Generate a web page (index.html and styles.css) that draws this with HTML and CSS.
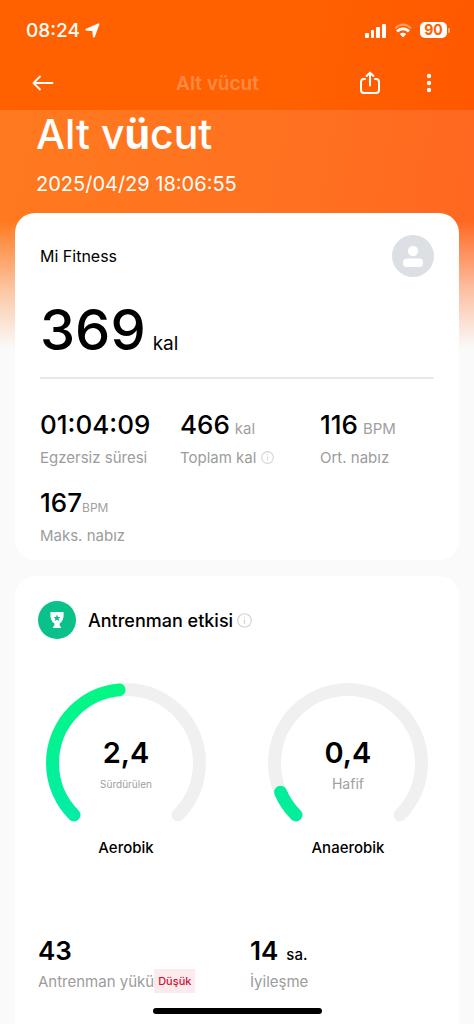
FILE: index.html
```html
<!DOCTYPE html>
<html lang="tr">
<head>
<meta charset="utf-8">
<meta name="viewport" content="width=device-width, initial-scale=1">
<title>Alt vücut</title>
<link rel="stylesheet" href="styles.css">
</head>
<body>
<div class="page">
  <header class="topbar">
    <div class="status">
      <div class="status-left">
        <span class="clock">08:24</span>
        <svg width="15" height="15" viewBox="0 0 16 16" aria-hidden="true"><path d="M15.400 1.400 10.400 14.800Q9.400 16.400 8.400 14.600L7.800 8.600 1.400 8.200Q-.4 7.400 1.200 6.200L13.800.6Q15.800.2 15.400 1.400Z" fill="#fff"/></svg>
      </div>
      <div class="status-right">
        <svg width="21" height="15" viewBox="0 0 21 15" fill="#fff" aria-hidden="true"><rect x="0" y="10" width="4" height="5" rx="1"/><rect x="6" y="7" width="3" height="8" rx="1"/><rect x="11" y="4" width="4" height="11" rx="1"/><rect x="17" y="1" width="4" height="14" rx="1"/></svg>
        <svg width="18" height="15" viewBox="0 0 18 15" fill="none" aria-hidden="true"><path d="M1 5.200Q9-2 17 5.200" stroke="#ff9a5c" stroke-width="2"/><path d="M3 8.400Q9 3 15 8.400" stroke="#fff" stroke-width="2.800"/><path d="M5.800 11Q9 8.400 12.200 11L9 14.600Z" fill="#fff"/></svg>
        <div class="battery"><span class="battery-level">90</span><span class="battery-tip"></span></div>
      </div>
    </div>
    <nav class="nav">
      <button class="icon-button" aria-label="Geri"><svg width="22" height="18" viewBox="0 0 22 18" fill="none" stroke="#fff" stroke-width="1.800" stroke-linecap="round" stroke-linejoin="round"><path d="M20.500 9H1.500M8 2.500 1.500 9 8 15.500"/></svg></button>
      <span class="nav-title">Alt vücut</span>
      <button class="icon-button" aria-label="Paylaş"><svg width="22" height="24" viewBox="0 0 22 24" fill="none" stroke="#fff" stroke-width="2" stroke-linecap="round" stroke-linejoin="round"><path d="M6 8H5Q2 8 2 11V19Q2 22 5 22H17Q20 22 20 19V11Q20 8 17 8H16M11 14.500V2M7.600 5 11 1.600 14.400 5"/></svg></button>
      <button class="icon-button" aria-label="Menü"><svg width="6" height="20" viewBox="0 0 6 20" fill="#fff"><circle cx="3" cy="3" r="2.200"/><circle cx="3" cy="10" r="2.200"/><circle cx="3" cy="17" r="2.200"/></svg></button>
    </nav>
  </header>

  <section class="hero">
    <h1 class="hero-title">Alt v<b>ü</b>cut</h1>
    <time class="hero-date">2025/04/29 18:06:55</time>
  </section>

  <main class="content">
    <section class="card summary">
      <div class="source">
        <span>Mi Fitness</span>
        <svg width="42" height="42" viewBox="0 0 42 42" aria-hidden="true"><circle cx="21" cy="21" r="21" fill="#dcdfe3"/><circle cx="21" cy="16" r="5.200" fill="#fff"/><rect x="11" y="23.500" width="20" height="8.500" rx="3.500" fill="#fff"/></svg>
      </div>
      <div class="calories"><span class="calories-value">369</span><span class="calories-unit">kal</span></div>
      <dl class="stats">
        <div class="stat"><dd class="stat-value">01:04:09</dd><dt class="stat-label">Egzersiz süresi</dt></div>
        <div class="stat"><dd class="stat-value">466 <small class="unit">kal</small></dd><dt class="stat-label">Toplam kal <svg width="13" height="13" viewBox="0 0 16 16" aria-hidden="true"><circle cx="8" cy="8" r="7.200" fill="none" stroke="#d4d4d4" stroke-width="1.300"/><path d="M8 7V12M8 4V5.300" stroke="#d4d4d4" stroke-width="1.300"/></svg></dt></div>
        <div class="stat"><dd class="stat-value">116 <small class="unit">BPM</small></dd><dt class="stat-label">Ort. nabız</dt></div>
        <div class="stat"><dd class="stat-value stat-value-tight">167<small class="unit unit-small">BPM</small></dd><dt class="stat-label">Maks. nabız</dt></div>
      </dl>
    </section>

    <section class="card effect">
      <h2 class="effect-title">
        <svg width="38" height="38" viewBox="0 0 38 38" aria-hidden="true"><circle cx="19" cy="19" r="19" fill="#0bc18b"/><path d="M12.500 11H25.500Q26.500 19.500 21.600 22.400V24.200L23.400 27H14.600L16.400 24.200V22.400Q11.500 19.500 12.500 11Z" fill="#fff"/><path d="M19 13.600 20 15.900 22.400 16.100 20.600 17.700 21.100 20.100 19 18.800 16.900 20.100 17.400 17.700 15.600 16.100 18 15.900Z" fill="#0bc18b"/></svg>
        <span>Antrenman etkisi</span>
        <svg class="info" width="15" height="15" viewBox="0 0 16 16" aria-hidden="true"><circle cx="8" cy="8" r="7.200" fill="none" stroke="#d4d4d4" stroke-width="1.300"/><path d="M8 7V12M8 4V5.300" stroke="#d4d4d4" stroke-width="1.300"/></svg>
      </h2>
      <div class="gauges">
        <figure class="gauge">
          <div class="dial">
            <svg width="162" height="162" viewBox="0 0 162 162" fill="none" stroke-width="13" stroke-linecap="round" aria-hidden="true">
              <defs><linearGradient id="green" x1="0" y1="1" x2="0" y2="0"><stop offset="0" stop-color="#03eda6"/><stop offset="1" stop-color="#03f784"/></linearGradient></defs>
              <path d="M29 133A73.500 73.500 0 1 1 133 133" stroke="#f0f0f0"/>
              <path d="M29 133A73.500 73.500 0 1 1 133 133" stroke="url(#green)" pathLength="100" stroke-dasharray="48 200"/>
            </svg>
            <div class="dial-text"><span class="dial-value">2,4</span><span class="dial-note dial-note-small">Sürdürülen</span></div>
          </div>
          <figcaption>Aerobik</figcaption>
        </figure>
        <figure class="gauge">
          <div class="dial">
            <svg width="162" height="162" viewBox="0 0 162 162" fill="none" stroke-width="13" stroke-linecap="round" aria-hidden="true">
              <path d="M29 133A73.500 73.500 0 1 1 133 133" stroke="#f0f0f0"/>
              <path d="M29 133A73.500 73.500 0 1 1 133 133" stroke="#03ee9a" pathLength="100" stroke-dasharray="8 200"/>
            </svg>
            <div class="dial-text"><span class="dial-value">0,4</span><span class="dial-note">Hafif</span></div>
          </div>
          <figcaption>Anaerobik</figcaption>
        </figure>
      </div>
      <dl class="loads">
        <div class="stat"><dd class="stat-value load-value">43</dd><dt class="stat-label load-label">Antrenman yükü<span class="tag">Düşük</span></dt></div>
        <div class="stat"><dd class="stat-value load-value">14 <small class="unit unit-dark">sa.</small></dd><dt class="stat-label load-label">İyileşme</dt></div>
      </dl>
    </section>
  </main>
  <div class="home-indicator"></div>
</div>
</body>
</html>
```
FILE: styles.css
```css
* { box-sizing: border-box; }

body, h1, h2, dl, dd, figure { margin: 0; }

body {
  background: #fafafa;
  color: #000;
  font-family: Inter, "Noto Sans", sans-serif;
}

svg { display: block; flex: none; }

.page {
  display: flex;
  flex-direction: column;
  min-height: 100vh;
  background:
    linear-gradient(180deg, transparent 220px, #fafafa99 290px, #fafafa 348px),
    linear-gradient(100deg, #ff7a1e 0, #ff7120 50%, #ff6020 100%);
}

.topbar {
  height: 110px;
  padding: 16px 24px 0 26px;
  background: linear-gradient(100deg, #ff6100 60%, #ff5800 100%);
  color: #fff;
}

.status, .status-left, .status-right, .nav, .battery, .source, .effect-title {
  display: flex;
  align-items: center;
}

.status { justify-content: space-between; height: 28px; }
.status-left { gap: 5px; }
.status-right { gap: 8px; }
.clock { font-size: 19px; font-weight: 500; }

.battery { gap: 1px; }

.battery-level {
  width: 27px;
  border-radius: 5px;
  background: #fff;
  color: #ff6100;
  font-size: 14px;
  font-weight: 700;
  line-height: 16px;
  text-align: center;
}

.battery-tip { width: 2px; height: 5px; border-radius: 1px; background: #ffb080; }

.nav { height: 78px; gap: 25px; padding-right: 4px; }

.icon-button {
  display: flex;
  justify-content: center;
  width: 34px;
  padding: 0;
  border: 0;
  background: none;
}

.nav-title {
  flex: 1;
  padding-left: 22px;
  color: #ff8a45;
  font-size: 19px;
  font-weight: 600;
  text-align: center;
}

.hero { padding: 0 36px; height: 103px; color: #fff; }
.hero-title { font-size: 41px; font-weight: 500; line-height: 48px; }
.hero-title b { font-weight: 700; }
.hero-date { display: block; margin-top: 14px; font-size: 20px; line-height: 24px; }

.content {
  display: flex;
  flex: 1;
  flex-direction: column;
  gap: 16px;
  padding: 0 15px;
}

.card { border-radius: 20px; background: #fff; }

.summary { padding: 22px 25px 9px; }
.source { justify-content: space-between; font-size: 16px; }

.calories {
  display: flex;
  align-items: baseline;
  gap: 7px;
  height: 102px;
  padding-top: 17px;
  border-bottom: 2px solid #e8e8e8;
}

.calories-value { font-size: 56px; font-weight: 500; line-height: 72px; }
.calories-unit { font-size: 19px; }

.stats {
  display: grid;
  grid-template-columns: repeat(3, 1fr);
  gap: 14px 26px;
  padding-top: 30px;
}

.stat { white-space: nowrap; }

.stat-value {
  display: flex;
  align-items: baseline;
  gap: 5px;
  height: 32px;
  font-size: 26px;
  font-weight: 500;
  line-height: 32px;
}

.stat-value-tight { gap: 0; }

.stat-label {
  display: flex;
  align-items: center;
  gap: 5px;
  height: 32px;
  color: #9c9c9c;
  font-size: 15px;
}

.unit { color: #a0a0a0; font-size: 15px; font-weight: 400; }
.unit-small { font-size: 12px; }
.unit-dark { color: #000; font-weight: 500; }

.effect { flex: 1; padding: 25px 23px 16px; border-radius: 20px 20px 0 0; }
.effect-title { gap: 12px; font-size: 18px; font-weight: 500; }
.info { margin-left: -8px; }

.gauges {
  display: grid;
  grid-template-columns: repeat(2, 1fr);
  gap: 46px;
  padding-top: 43px;
}

.gauge { display: flex; flex-direction: column; align-items: center; }
.dial { display: grid; place-items: center; }
.dial > * { grid-area: 1 / 1; }
.dial-text { display: flex; flex-direction: column; align-items: center; padding-top: 6px; }
.dial-value { font-size: 29px; font-weight: 600; line-height: 36px; }
.dial-note { color: #a0a0a0; font-size: 14px; line-height: 26px; }
.dial-note-small { font-size: 10px; }
.gauge figcaption { font-size: 15px; font-weight: 500; line-height: 20px; margin-top: -6px; }

.loads {
  display: grid;
  grid-template-columns: 212px 1fr;
  padding-top: 77px;
}

.load-value { gap: 8px; font-weight: 600; }
.load-label { height: 28px; }

.tag {
  margin-left: -5px;
  padding: 0 4px;
  background: #fdeaec;
  color: #d0103a;
  font-size: 11px;
  font-weight: 500;
  line-height: 24px;
}

.home-indicator {
  position: fixed;
  bottom: 10px;
  left: 50%;
  width: 169px;
  height: 6px;
  margin-left: -84px;
  border-radius: 3px;
  background: #000;
}
```
